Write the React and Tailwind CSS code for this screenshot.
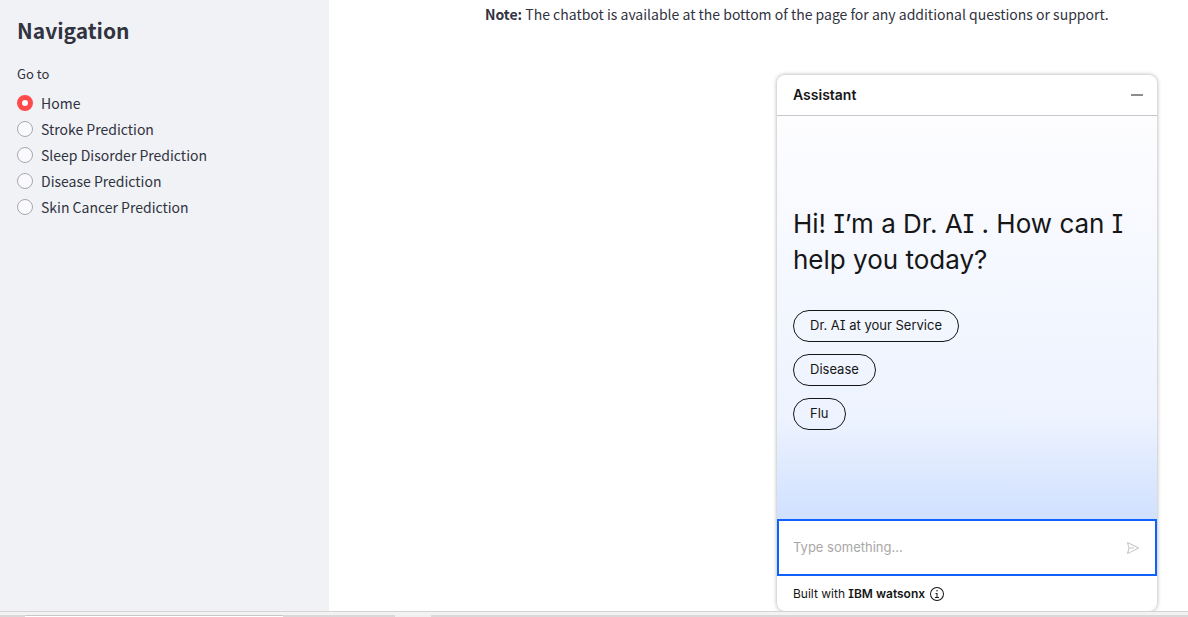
import { useState } from "react";

const pages = [
  "Home",
  "Stroke Prediction",
  "Sleep Disorder Prediction",
  "Disease Prediction",
  "Skin Cancer Prediction",
];

const suggestions = ["Dr. AI at your Service", "Disease", "Flu"];

function Sidebar() {
  const [page, setPage] = useState("Home");
  return (
    <nav className="w-[329px] shrink-0 bg-[#f0f2f6] px-[17px] pt-[15px]">
      <h2 className="text-[21px] leading-[30px] font-semibold">Navigation</h2>
      <fieldset className="pt-[19px]">
        <legend className="float-left w-full text-[13px] leading-5">Go to</legend>
        <div className="clear-both flex flex-col pt-1.5">
          {pages.map((name) => (
            <label key={name} className="flex h-[26px] items-center gap-2 text-sm leading-6">
              <input
                type="radio"
                name="page"
                checked={page === name}
                onChange={() => setPage(name)}
                className="size-4 shrink-0 appearance-none rounded-full border border-[#a6a9b3] bg-[#fafafc] checked:border-[5px] checked:border-[#ff4b4b] checked:bg-white"
              />
              {name}
            </label>
          ))}
        </div>
      </fieldset>
    </nav>
  );
}

function Chat() {
  return (
    <section
      aria-label="Assistant"
      className="flex w-[380px] flex-1 flex-col self-end overflow-hidden rounded-lg bg-white font-['Inter','Noto_Sans',sans-serif] [font-feature-settings:'cv08'] text-[#161616] shadow-[0_0_4px_rgba(0,0,0,0.35)]"
    >
      <header className="flex h-[41px] shrink-0 items-center justify-between border-b border-[#c6c6c6] px-4">
        <h3 className="text-sm font-semibold">Assistant</h3>
        <button type="button" aria-label="Minimize" className="-mr-1.5 flex size-5 items-center justify-center">
          <svg viewBox="0 0 12 2" className="h-[2px] w-3" fill="#8d8d8d">
            <path d="M0 0h12v2H0z" />
          </svg>
        </button>
      </header>
      <div className="flex flex-1 flex-col items-start justify-center bg-linear-to-b from-[#fdfdff] via-[#edf3ff] via-75% to-[#d0e0ff] px-4">
        <p className="text-[26px] leading-9">Hi! I’m a Dr. AI . How can I help you today?</p>
        <div className="flex flex-col items-start gap-3 pt-8">
          {suggestions.map((text) => (
            <button
              key={text}
              type="button"
              className="h-8 rounded-full border border-[#161616] px-4 text-[13px]"
            >
              {text}
            </button>
          ))}
        </div>
      </div>
      <form
        className="flex h-[57px] shrink-0 items-center border-2 border-[#0f62fe] bg-white pr-3.5 pl-[14px]"
        onSubmit={(e) => e.preventDefault()}
      >
        <input
          type="text"
          aria-label="Message"
          placeholder="Type something..."
          className="min-w-0 flex-1 text-[13px] outline-none placeholder:text-[#a8a8a8]"
        />
        <button type="submit" aria-label="Send">
          <svg viewBox="0 0 32 32" className="size-4" fill="#c6c6c6">
            <path d="M27.45 15.11l-22-11a1 1 0 0 0-1.08.12 1 1 0 0 0-.33 1L7 16 4 26.74A1 1 0 0 0 5 28a1 1 0 0 0 .45-.11l22-11a1 1 0 0 0 0-1.78zM6.82 25.36 8.76 17H18v-2H8.76L6.46 6.83 24.76 16z" />
          </svg>
        </button>
      </form>
      <footer className="flex h-[35px] shrink-0 items-center gap-1 px-4 text-xs">
        <span>
          Built with <b className="font-semibold">IBM watsonx</b>
        </span>
        <button type="button" aria-label="About watsonx">
          <svg viewBox="0 0 32 32" className="size-4" fill="#161616">
            <path d="M17 22v-8h-4v2h2v6h-3v2h8v-2zM16 8a1.5 1.5 0 1 0 1.5 1.5A1.5 1.5 0 0 0 16 8z" />
            <path d="M16 30a14 14 0 1 1 14-14 14 14 0 0 1-14 14zm0-26a12 12 0 1 0 12 12A12 12 0 0 0 16 4z" />
          </svg>
        </button>
      </footer>
    </section>
  );
}

export default function App() {
  return (
    <div className="flex min-h-screen flex-col bg-white font-['Noto_Sans_CJK_SC','Noto_Sans',sans-serif] text-[#31333f]">
      <div className="flex flex-1">
        <Sidebar />
        <main className="flex min-w-0 flex-1 flex-col pr-[31px] pl-[156px]">
          <p className="mb-[49px] pt-0.5 text-sm leading-6">
            <strong className="font-semibold">Note:</strong> The chatbot is available at the bottom of the page for
            any additional questions or support.
          </p>
          <Chat />
        </main>
      </div>
      <div className="flex h-[6px] shrink-0 items-end border-t border-[#d4d4d4] bg-[#f3f3f3]">
        <div className="h-[2px] w-[25px] bg-[#d9d9d9]" />
        <div className="h-[2px] w-[258px] border-t border-[#c8c8c8] bg-white" />
        <div className="h-[2px] w-28 bg-[#d9d9d9]" />
        <div className="h-[2px] w-9 bg-[#f0f0f0]" />
        <div className="h-[2px] flex-1 bg-[#d9d9d9]" />
      </div>
    </div>
  );
}
